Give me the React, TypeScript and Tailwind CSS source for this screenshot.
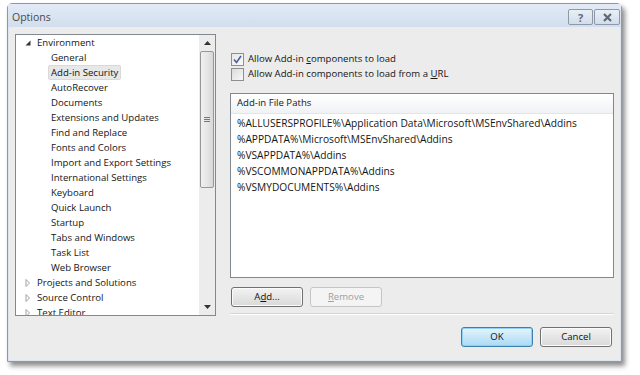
import React from "react";

const font = { fontFamily: '"Open Sans", "Noto Sans", sans-serif' };

const envChildren = [
  "General",
  "Add-in Security",
  "AutoRecover",
  "Documents",
  "Extensions and Updates",
  "Find and Replace",
  "Fonts and Colors",
  "Import and Export Settings",
  "International Settings",
  "Keyboard",
  "Quick Launch",
  "Startup",
  "Tabs and Windows",
  "Task List",
  "Web Browser",
];

const paths = [
  "%ALLUSERSPROFILE%\\Application Data\\Microsoft\\MSEnvShared\\Addins",
  "%APPDATA%\\Microsoft\\MSEnvShared\\Addins",
  "%VSAPPDATA%\\Addins",
  "%VSCOMMONAPPDATA%\\Addins",
  "%VSMYDOCUMENTS%\\Addins",
];

function Expanded() {
  return (
    <svg width="6" height="6" viewBox="0 0 6 6" className="mr-[6px]">
      <path d="M5.5 0.5 L5.5 5.5 L0.5 5.5 Z" fill="#333" />
    </svg>
  );
}
function Collapsed() {
  return (
    <svg width="6" height="8" viewBox="0 0 6 8" className="mr-[6px]">
      <path d="M1 0.5 L4.5 4 L1 7.5 Z" fill="none" stroke="#a0a0a0" strokeWidth="1" />
    </svg>
  );
}

function Btn({ children, disabled, primary }: { children: React.ReactNode; disabled?: boolean; primary?: boolean }) {
  const cls = primary
    ? "border-[#3c7fb1] bg-gradient-to-b from-[#e5f4fc] to-[#a9daf5] text-[#111] shadow-[inset_0_0_0_1px_#8fd0f4]"
    : disabled
    ? "border-[#c2c6c9] bg-[#f4f4f4] text-[#a0a0a0]"
    : "border-[#707070] bg-gradient-to-b from-[#f3f3f3] to-[#d9d9d9] text-[#111] shadow-[inset_0_0_0_1px_#fbfbfb]";
  return (
    <div className={`flex h-[20px] w-[72px] items-center justify-center rounded-[3px] border text-[9.6px] ${cls}`}>
      {children}
    </div>
  );
}

export default function App() {
  return (
    <div className="h-[375px] w-[640px] bg-white pl-[7px] pt-[3px]" style={font}>
      <div className="flex h-[359px] w-[615px] flex-col rounded-t-[5px] border border-[#8a9aae] bg-[#dbe5f1] shadow-[3px_4px_5px_rgba(0,0,0,0.45)]">
        {/* title bar */}
        <div className="flex h-[23px] items-center bg-gradient-to-b from-[#e2ebf6] to-[#d2deed] pl-[4px] pr-[1px]">
          <span className="mt-[4px] text-[10.5px] text-[#4a4a4a]">Options</span>
          <div className="ml-auto flex gap-[1px] self-start pt-[5px]">
            <div className="flex h-[16px] w-[25px] items-center justify-center rounded-[2px] border border-[#8c99a8] bg-gradient-to-b from-[#e9eff6] to-[#d3dde9] text-[11px] font-bold leading-none text-[#606a76]">
              ?
            </div>
            <div className="flex h-[16px] w-[26px] items-center justify-center rounded-[2px] border border-[#8c99a8] bg-gradient-to-b from-[#e9eff6] to-[#d3dde9]">
              <svg width="11" height="9" viewBox="0 0 11 9">
                <path d="M2 1 L9 8 M9 1 L2 8" stroke="#5f6975" strokeWidth="2.2" />
              </svg>
            </div>
          </div>
        </div>
        {/* client */}
        <div className="mx-[1px] mb-[1px] flex flex-1 flex-col bg-[#ececec] px-[6px] pt-[7px]">
          <div className="flex">
            {/* tree */}
            <div className="flex h-[282px] w-[201px] border border-[#828790] bg-white">
              <div className="flex flex-1 flex-col overflow-hidden whitespace-nowrap pl-[9px] text-[9.6px] leading-[15px] text-[#151515]">
                <div className="flex h-[15px] items-center">
                  <Expanded />
                  <span>Environment</span>
                </div>
                {envChildren.map((c) => (
                  <div key={c} className="flex h-[15px] items-center pl-[26px]">
                    {c === "Add-in Security" ? (
                      <span className="-ml-[3px] rounded-[2px] border border-[#d9d9d9] bg-[#e8e8e8] px-[2px] leading-[13px]">
                        {c}
                      </span>
                    ) : (
                      <span>{c}</span>
                    )}
                  </div>
                ))}
                {["Projects and Solutions", "Source Control", "Text Editor"].map((c) => (
                  <div key={c} className="flex h-[15px] items-center">
                    <Collapsed />
                    <span>{c}</span>
                  </div>
                ))}
              </div>
              {/* scrollbar */}
              <div className="flex w-[16px] flex-col bg-[#ececec]">
                <div className="flex h-[16px] items-center justify-center">
                  <svg width="7" height="4" viewBox="0 0 7 4">
                    <path d="M0 4 L3.5 0 L7 4 Z" fill="#333" />
                  </svg>
                </div>
                <div className="mx-[1px] flex h-[137px] items-center justify-center rounded-[2px] border border-[#979797] bg-gradient-to-r from-[#f0f0f0] via-[#e6e6e6] to-[#d8d8d8]">
                  <div className="flex flex-col gap-[1px]">
                    <div className="h-[1px] w-[6px] bg-[#777]" />
                    <div className="h-[1px] w-[6px] bg-[#777]" />
                    <div className="h-[1px] w-[6px] bg-[#777]" />
                  </div>
                </div>
                <div className="flex-1" />
                <div className="flex h-[16px] items-center justify-center">
                  <svg width="7" height="4" viewBox="0 0 7 4">
                    <path d="M0 0 L3.5 4 L7 0 Z" fill="#333" />
                  </svg>
                </div>
              </div>
            </div>
            {/* right */}
            <div className="ml-[14px] flex flex-1 flex-col pt-[19px]">
              <div className="flex flex-col gap-[2px] pl-[1px] text-[9.6px] text-[#151515]">
                <div className="flex h-[13px] items-center">
                  <div className="mr-[4px] flex h-[13px] w-[13px] items-center justify-center border border-[#8e8f8f] bg-gradient-to-br from-[#e6e6e6] to-[#fafafa]">
                    <svg width="9" height="9" viewBox="0 0 9 9">
                      <path d="M1 4.5 L3.5 7.5 L8 1" fill="none" stroke="#4a5f97" strokeWidth="1.6" />
                    </svg>
                  </div>
                  <span>
                    Allow Add-in <u>c</u>omponents to load
                  </span>
                </div>
                <div className="flex h-[13px] items-center">
                  <div className="mr-[4px] h-[13px] w-[13px] border border-[#8e8f8f] bg-gradient-to-br from-[#dcdcdc] to-[#f8f8f8]" />
                  <span>
                    Allow Add-in components to load from a <u>U</u>RL
                  </span>
                </div>
              </div>
              <div className="mt-[12px] flex h-[185px] flex-col border border-[#828790] bg-white">
                <div className="flex h-[20px] items-center border-b border-[#e5e5e5] bg-gradient-to-b from-[#ffffff] to-[#f1f2f4] pl-[6px] text-[9.6px] text-[#151515]">
                  Add-in File Paths
                </div>
                <div className="flex flex-col whitespace-nowrap pl-[6px] pt-[1px] text-[10.2px] leading-[16px] text-[#151515]">
                  {paths.map((p) => (
                    <div key={p} className="h-[16px]">
                      {p}
                    </div>
                  ))}
                </div>
              </div>
              <div className="mt-[9px] flex gap-[7px] pl-[1px]">
                <Btn>
                  A<u>d</u>d...
                </Btn>
                <Btn disabled>
                  <u>R</u>emove
                </Btn>
              </div>
              <div className="mt-[6px] h-[2px] border-t border-b border-t-[#d5d5d5] border-b-white" />
            </div>
          </div>
          <div className="mt-[11px] flex justify-end gap-[7px] pr-[2px]">
            <Btn primary>OK</Btn>
            <Btn>Cancel</Btn>
          </div>
        </div>
      </div>
    </div>
  );
}
